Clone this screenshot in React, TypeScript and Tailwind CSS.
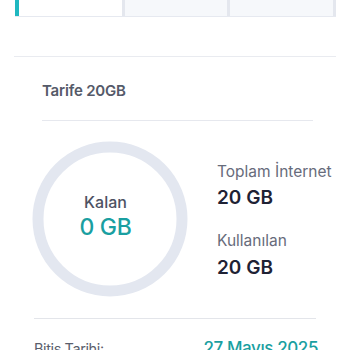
import React from 'react';

const font = { fontFamily: 'Inter, "Noto Sans", sans-serif' };

// usage ring with nothing left
const UsageRing = ({ remaining }: { remaining: string }) => (
  <div className="relative w-[156px] h-[156px] shrink-0">
    <svg width="156" height="156" viewBox="0 0 156 156" className="absolute inset-0">
      <circle cx="78" cy="78" r="72" fill="none" stroke="#e3e7f0" strokeWidth="11" />
    </svg>
    <div className="absolute inset-0 flex flex-col items-center justify-center pb-[6px] pr-[9px]">
      <span className="text-[16px] font-medium text-[#4d5263] leading-none">Kalan</span>
      <span className="text-[23px] font-medium text-[#1a9fa1] leading-none mt-[6px] tracking-[-0.3px]">{remaining}</span>
    </div>
  </div>
);

export default function App() {
  const tabs = ['a', 'b', 'c'];

  return (
    <div className="w-[350px] h-[350px] overflow-hidden bg-white" style={font}>
      <div className="ml-[15px] w-[321px] flex h-[17px] border-b border-[#e6e9f0]">
        <div className="w-[4px] bg-[#1fb8c0]" />
        {tabs.map((t, i) => (
          <div
            key={t}
            className={`flex-1 border-r-[3px] border-[#e4e7ee] ${i === 0 ? 'bg-white' : 'bg-[#f6f8fb]'}`}
          />
        ))}
      </div>

      <div className="mt-[39px] mx-[14px] border-t border-[#e9ebf0]" />

      <div className="px-[42px] pt-[26px]">
        <h2 className="text-[15px] font-semibold text-[#555a69] leading-none tracking-[-0.2px]">Tarife 20GB</h2>
        <div className="mt-[22px] border-t border-[#e6e8ee] mr-[-5px]" />
      </div>

      <div className="flex items-center pl-[32px] pt-[20px]">
        <UsageRing remaining="0 GB" />
        <div className="ml-[29px] flex flex-col pt-[2px]">
          <span className="text-[15.5px] text-[#676b7b] leading-none">Toplam İnternet</span>
          <span className="text-[19px] font-semibold text-[#1f2235] leading-none mt-[9px]">20 GB</span>
          <span className="text-[15.5px] text-[#676b7b] leading-none mt-[26px]">Kullanılan</span>
          <span className="text-[19px] font-semibold text-[#1f2235] leading-none mt-[9px]">20 GB</span>
        </div>
      </div>

      <div className="mx-[34px] mt-[21px] border-t border-[#e3e5ea]" />

      <div className="flex justify-between items-baseline px-[34px] mr-[-2px] pt-[17px]">
        <span className="text-[14.5px] text-[#5a5e6c] tracking-[-0.4px]">Bitiş Tarihi:</span>
        <span className="text-[17px] font-medium text-[#1a9fa1] tracking-[-0.4px]">27 Mayıs 2025</span>
      </div>
    </div>
  );
}
